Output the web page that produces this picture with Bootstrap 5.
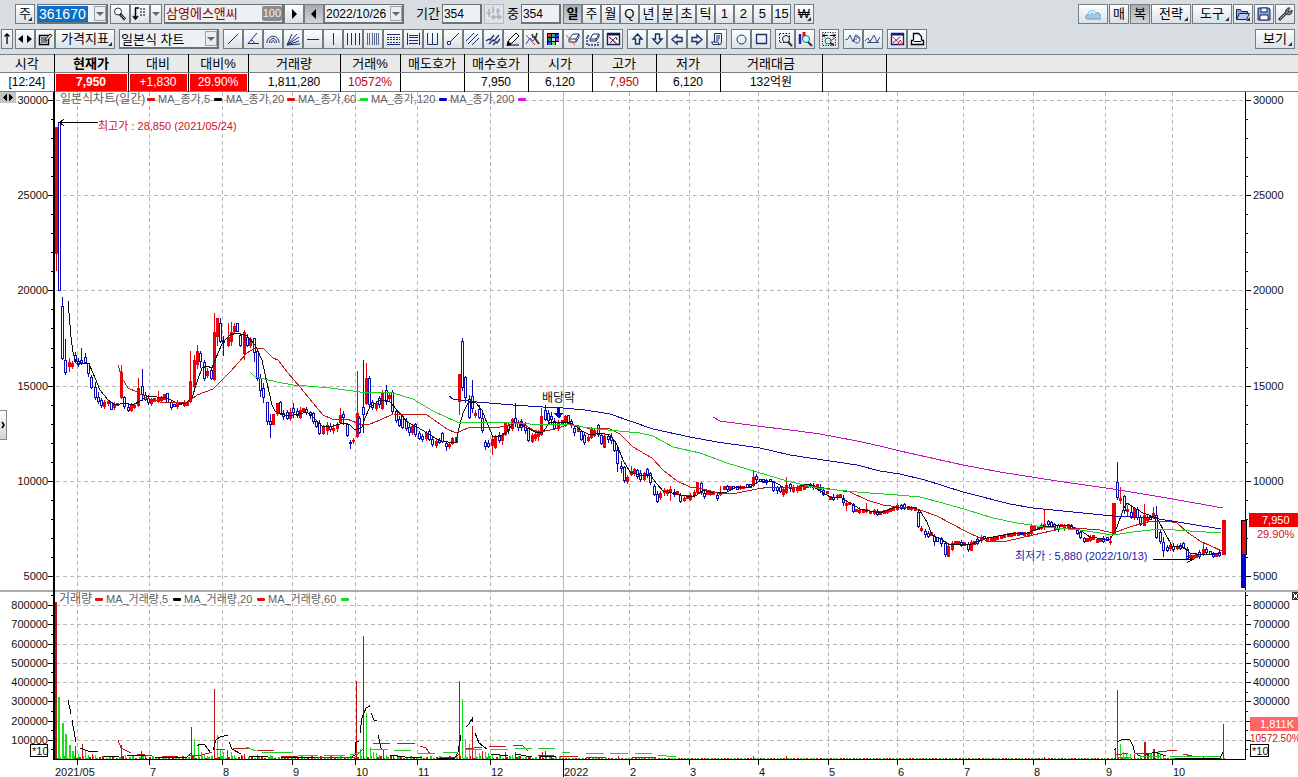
<!DOCTYPE html>
<html lang="ko">
<head>
<meta charset="utf-8">
<meta name="viewport" content="width=device-width, initial-scale=1">
<title>삼영에스앤씨 361670</title>
<link href="https://cdn.jsdelivr.net/npm/bootstrap@5.3.0/dist/css/bootstrap.min.css" rel="stylesheet">
<style>
body{font:13px/18px "Liberation Sans","Noto Sans CJK KR",sans-serif;color:#000;background:#fff}
.toolbars{background:#d8dde1;padding:4px 3px 5px 1px;gap:5px}
.g2{margin-left:2px}
.g3{margin-left:3px}
.g14{margin-left:14px}
.cluster{gap:1px}
.tb{height:20px;width:20px;padding:0;border:1px solid #747c80;border-radius:0;background:linear-gradient(#fdfefe,#d9e2e8);font:inherit;color:#000;flex:none;display:flex;align-items:center;justify-content:center;position:relative;white-space:nowrap}
.tb svg{display:block;flex:none}
.tb.unit{width:19px}
.tb.slim{width:12px}
.tb.mid{width:30px}
.tb.wide{width:40px}
.tb.wider{width:60px}
.tb.on{background:linear-gradient(#a9abad,#d2d4d6)}
.tb.off{border-color:#b4babd;background:#dfe3e6}
.tb.more::after{content:"";position:absolute;right:2px;bottom:2px;border:2px solid;border-color:transparent #333 #333 transparent}
.fieldbox{height:20px;border:1px solid #6b7377;border-right-width:2px;border-bottom-width:2px;background:#eef1f3;flex:none;display:flex;align-items:center;overflow:hidden}
.fieldbox input,.fieldbox select{border:0;outline:0;padding:0 1px;height:16px;background:transparent;font:inherit;font-size:12px;color:#000;appearance:none;border-radius:0;min-width:0;flex:1}
.fieldbox select{font-size:13px}
.fieldbox .picked{background:#0b6fca;color:#fff;font-size:14px;flex:none;width:50px}
.drop{width:12px;height:15px;padding:0;border:1px solid #9aa3a8;background:#e9edf0;flex:none;display:flex;align-items:center;justify-content:center;margin-left:auto}
.drop::after{content:"";border:4px solid transparent;border-top-color:#667;border-bottom:0}
.w-code{width:71px}.w-name{width:120px}.w-date{width:80px}.w-num{width:40px}.w-type{width:100px}
.fieldbox .stockname{color:#8b0000;font-size:13px}
.pct{background:#8c8c8c;color:#eee;font-size:11px;line-height:15px;border-radius:2px;padding:0 1px}
.quotes{table-layout:fixed;width:100%;border-collapse:collapse;border-top:1px solid #7b7f82;border-bottom:1px solid #7b7f82;font-size:12px}
.quotes th{font-weight:400;font-size:13px;height:18px;line-height:17px;background:#e9e9e9;border-bottom:1px solid #7b7f82}
.quotes th,.quotes td{text-align:center;padding:0;border-right:1px solid #000;white-space:nowrap;overflow:hidden}
.quotes td{height:19px;line-height:17px}
.quotes th:last-child,.quotes td:last-child{border-right:0}
.quotes .hot{background:#f00;color:#fff;margin:0 1px;line-height:17px}
.up{color:#c00010}
.c54{width:54px}.c74{width:74px}.c60{width:60px}.c92{width:92px}.c64{width:64px}.c102{width:102px}
.chart{display:block;width:100%;height:auto}
.chart text{font-family:"Liberation Sans","Noto Sans CJK KR",sans-serif;font-size:11px;fill:#111}
.chart .legend{fill:#606060}
.chart .title12{font-size:12px}
.chart .t-red{fill:#d0101c}
.chart .t-blue{fill:#2020b0}
.chart .t-white{fill:#fff}
.chart .t-small{font-size:10px}
.handle{position:absolute;left:0;top:46.4%;width:7px;height:30px;border:1px solid #7f888d;border-left:0;background:linear-gradient(#fff,#ced4d8);padding:0;display:flex;align-items:center}
</style>
</head>
<body>
<header class="toolbars d-flex flex-column">
  <div class="d-flex align-items-center" role="toolbar" aria-label="종목">
    <button class="tb more g14">주</button>
    <div class="fieldbox w-code g2"><input class="picked" aria-label="종목코드" value="361670"><button class="drop" aria-label="목록"></button></div>
    <button class="tb g2" data-i="search" aria-label="찾기"></button>
    <button class="tb" data-i="sort" aria-label="정렬"></button>
    <button class="tb slim" data-i="caret" aria-label="정렬 목록"></button>
    <div class="fieldbox w-name g2"><input class="stockname" aria-label="종목명" value="삼영에스앤씨"><span class="pct">100</span></div>
    <button class="tb" data-i="play" aria-label="다음"></button>
    <button class="tb on" data-i="back" aria-label="이전"></button>
    <div class="fieldbox w-date"><input aria-label="날짜" value="2022/10/26"><button class="drop" aria-label="달력"></button></div>
    <label class="ps-2 ms-1" for="span">기간</label>
    <div class="fieldbox w-num g2"><input id="span" value="354"></div>
    <button class="tb off g2" data-i="fit" aria-label="맞춤"></button>
    <label class="g3" for="mid">중</label>
    <div class="fieldbox w-num g2"><input id="mid" value="354"></div>
    <div class="d-flex g2">
      <button class="tb unit on fw-bold">일</button><button class="tb unit">주</button><button class="tb unit">월</button><button class="tb unit">Q</button><button class="tb unit">년</button><button class="tb unit">분</button><button class="tb unit">초</button><button class="tb unit">틱</button><button class="tb unit">1</button><button class="tb unit">2</button><button class="tb unit">5</button><button class="tb unit">15</button>
    </div>
    <button class="tb more g3">₩</button>
    <div class="d-flex ms-auto cluster">
      <button class="tb mid" data-i="cloud" aria-label="클라우드"></button><button class="tb">매</button><button class="tb on">복</button><button class="tb wide more">전략</button><button class="tb wide more">도구</button><button class="tb more" data-i="folder" aria-label="열기"></button><button class="tb" data-i="save" aria-label="저장"></button><button class="tb" data-i="wrench" aria-label="설정"></button>
    </div>
  </div>
  <div class="d-flex align-items-center" role="toolbar" aria-label="도구">
    <button class="tb slim" data-i="thinup" aria-label="위로"></button>
    <div class="d-flex me-1 g2"><button class="tb" data-i="lr" aria-label="좌우"></button><button class="tb" data-i="note" aria-label="편집"></button><button class="tb wider more">가격지표</button></div>
    <div class="fieldbox w-type me-1"><select aria-label="차트 종류"><option>일본식 차트</option></select><span class="drop"></span></div>
    <div class="d-flex gap-1" id="drawtools"></div>
    <button class="tb wide more ms-auto">보기</button>
  </div>
</header>
<table class="quotes">
  <colgroup><col class="c54"><col class="c74"><col class="c60"><col class="c60"><col class="c92"><col class="c60"><col class="c64"><col class="c64"><col class="c64"><col class="c64"><col class="c64"><col class="c102"><col class="c64"><col></colgroup>
  <thead><tr><th>시각</th><th class="fw-bold">현재가</th><th>대비</th><th>대비%</th><th>거래량</th><th>거래%</th><th>매도호가</th><th>매수호가</th><th>시가</th><th>고가</th><th>저가</th><th>거래대금</th><th></th><th></th></tr></thead>
  <tbody><tr><td>[12:24]</td><td><div class="hot fw-bold">7,950</div></td><td><div class="hot">+1,830</div></td><td><div class="hot">29.90%</div></td><td>1,811,280</td><td class="up">10572%</td><td></td><td>7,950</td><td>6,120</td><td class="up">7,950</td><td>6,120</td><td>132억원</td><td></td><td></td></tr></tbody>
</table>
<main class="position-relative">
  <svg class="chart" id="chart" viewBox="0 92 1298 685" role="img" aria-label="일본식차트(일간)"></svg>
  <button class="handle" aria-label="펼치기"><svg width="6" height="8" viewBox="0 0 6 8"><path d="M2 1l2 3-2 3" fill="none" stroke="#000" stroke-width="1.6"/></svg></button>
</main>
<script src="https://cdn.jsdelivr.net/npm/bootstrap@5.3.0/dist/js/bootstrap.bundle.min.js"></script>
<script>
// Toolbar icons on a 16 x 16 grid. "n" is the navy line style shared by the drawing tools.
const n='fill="none" stroke="#1b2f6b"', k='fill="none" stroke="#000"';
const icons={
search:`<circle cx="6" cy="5.500" r="3.500" fill="#fff" stroke="#333"/><path d="M8 8l5 5.500" stroke="#222" stroke-width="3"/><path d="M9 9l4 4" stroke="#aaa"/>`,
sort:`<path d="M3.500 2v11M1 10l2.500 3L6 10M3 2h4" ${k} stroke-width="1.500"/><path d="M8 3h6M8 6h6M8 9h5" ${k} stroke-dasharray="2 1"/>`,
caret:`<path d="M4 6h8l-4 4z" fill="#667"/>`,
play:`<path d="M6 3v10l5-5z"/>`,back:`<path d="M10 3v10L5 8z"/>`,
fit:`<path d="M3 3v8M1 7h4M7 1v6M12 2v7M10 5h4M6 11h9M8 9l-2 2 2 2M12 9l3 2-3 2" fill="none" stroke="#aab0b4" stroke-width="1.500"/>`,
cloud:`<path d="M2 13c-3-1-2-4 1-4 0-5 6-6 8-2 3-1 4 1 4 2 3 1 2 4 0 4z" fill="#9cc9e8" stroke="#6d9abb"/><path d="M4 8c1-3 4-3 6-1" stroke="#e3f3fd" stroke-width="2" fill="none"/>`,
folder:`<path d="M1.500 13.500v-10h4l1 2h6v3" fill="#8ea2d4" stroke="#152453"/><path d="M1.500 13.500l3-6h10l-3 6z" fill="#b8c8ee" stroke="#152453"/>`,
save:`<path d="M2 2h11l1 1v11H2z" fill="#8da0d8" stroke="#1b2659"/><path d="M5 2h6v4H5zM4 9h8v5H4z" fill="#fff" stroke="#1b2659"/><path d="M9 3v2M6 11h4"/>`,
wrench:`<path d="M2 14l7-7" stroke="#333" stroke-width="3"/><path d="M3 13l6-6" stroke="#bbb"/><path d="M9 8c-2-4 2-7 4-6l-2 3 1 1 3-2c1 4-3 6-6 4" fill="#777" stroke="#333"/>`,
thinup:`<path d="M8 13V3M5.500 5.500L8 3l2.500 2.500" ${k} stroke-width="1.300"/>`,
lr:`<path d="M6 4v8L1 8zM10 4v8l5-4z"/><path d="M4 8h2M10 8h2" stroke="#000" stroke-width="2"/>`,
note:`<path d="M2.500 4.500h9v9h-9z" fill="#fff" stroke="#000" stroke-width="1.500"/><path d="M4 7h5M4 9h4M4 11h6" ${k}/><path d="M8 9l5-6 2 1.500-5 5z" fill="#fff" stroke="#000"/>`,
line:`<path d="M3 13L13 3" ${n}/>`,angle:`<path d="M12 2L3 12.500h11M6 9c2 0 3 2 3 4" ${n}/>`,
arcs:`<path d="M2 12c0-9 12-9 12 0M4.500 12c0-6 7-6 7 0M6.500 12c0-3 3-3 3 0" ${n}/>`,
fan:`<path d="M2 14L14 10M2 14L14 6M2 14L12 3M2 14L7 3M2 14L15 13" ${n}/>`,
hl:`<path d="M2 8.500h12" ${n}/>`,vl:`<path d="M8.500 2v12" ${n}/>`,
vls:`<path d="M2.500 2v12M6.500 2v12M10.500 2v12M14.500 2v12" ${n}/>`,
vld:`<path d="M2.500 2v12M4.500 2v12M7.500 2v12M9.500 2v12M11.500 2v12M13.500 2v12" fill="none" stroke="#56648f"/>`,
dots:`<path d="M2 3.500h13M2 13.500h13" ${n}/><path d="M2 6.500h13M2 8.500h13M2 11.500h13" ${n} stroke-dasharray="2 1"/>`,
rows:`<path d="M2.500 2v12M14.500 2v12M4 4.500h9M4 6.500h9M4 9.500h9M4 12.500h9" ${n}/>`,
uu:`<path d="M2.500 2v11.500h5V2M7.500 13.500h5V2" ${n}/>`,
seg:`<path d="M5 11L14 2" ${n}/><path d="M2.500 10.500h3v3h-3z" fill="#fff" stroke="#1b2f6b"/>`,
par:`<path d="M1 10l8-8M3 13L13 3M7 14l7-7" ${n}/>`,
par2:`<path d="M1 10l3-2 1 1 4-5M4 13l4-4 1 1 5-6M8 14l3-3 1 1 3-4" ${n} stroke-width="1.300"/>`,
pencil:`<path d="M3 13l1-4 7-7 3 3-7 7z" fill="#fff" stroke="#000"/><path d="M2 14.500l1-4 3 3zM2 14h12" fill="#000" stroke="#000"/>`,
cut:`<path d="M1 4l9 10" stroke="#d22"/><path d="M1 13l4-6 3 3 3-4" fill="none" stroke="#3344bb"/><path d="M9 6l5 7" stroke="#333" stroke-width="2"/><path d="M7 3l1 3 3 0 1-4" fill="none" stroke="#333" stroke-width="1.600"/>`,
pal:`<path d="M2 2h12v12H2z"/><path d="M3 3h3v3H3z" fill="#d33"/><path d="M7 3h3v3H7z" fill="#3a9"/><path d="M11 3h3v3h-3z" fill="#14c"/><path d="M3 7h3v3H3z" fill="#186"/><path d="M7 7h3v3H7z" fill="#aef"/><path d="M11 7h3v3h-3z" fill="#84d"/><path d="M3 11h3v3H3z" fill="#35f"/><path d="M7 11h3v3H7z" fill="#7d4"/><path d="M11 11h3v3h-3z" fill="#fff"/>`,
era:`<path d="M4 8l4-5h6l-3 5zM4 8v3h7V8M11 11l3-5V3" fill="#fff" stroke="#1b2f6b"/><path d="M1 4l9 10" stroke="#e44"/>`,
era2:`<path d="M5 8l3-5h6l-3 5zM5 8v2h6V8M11 10l3-4V3" fill="#fff" stroke="#1b2f6b"/><path d="M2 6v8h11v-3M2 5h3" ${n} stroke-dasharray="2 1" stroke-width="1.400"/>`,
xw:`<path d="M2.500 2.500h12v11h-12z" fill="#fff" stroke="#151b52" stroke-width="1.400"/><path d="M2 3.500h13" stroke="#151b52" stroke-width="2"/><path d="M4 6l8 7" stroke="#d22" stroke-width="1.300"/><path d="M5 12l6-6 1 3" ${n}/>`,
up:`<path d="M8.500 3l4.500 5h-2.500v5h-4V8H4z" ${n} stroke-width="1.400"/>`,
down:`<path d="M8.500 13L13 8h-2.500V3h-4v5H4z" ${n} stroke-width="1.400"/>`,
left:`<path d="M3 8.500L8 4v2.500h5v4H8V13z" ${n} stroke-width="1.400"/>`,
right:`<path d="M13 8.500L8 4v2.500H3v4h5V13z" ${n} stroke-width="1.400"/>`,
scroll:`<path d="M5.500 11V2.500h7V11l-1 2.500H4L2.500 11H9l1 2.500M7 5h4M7 7h4M7 9h3" fill="none" stroke="#1b2f6b"/>`,
circ:`<circle cx="8.500" cy="8.500" r="4.500" ${n}/>`,sq:`<path d="M3.500 3.500h10v9h-10z" ${n} stroke-width="1.300"/>`,
zoomr:`<path d="M2.500 2.500h10v9h-10z" ${k} stroke-dasharray="1.500 1.500"/><circle cx="9" cy="8" r="3.500" fill="#eef" stroke="#222"/><path d="M11 11l4 4" stroke="#333" stroke-width="2"/>`,
zoomc:`<path d="M3 3v10" stroke="#22a" stroke-width="2.500"/><path d="M7 1v8" stroke="#d11" stroke-width="3"/><circle cx="9" cy="8" r="3.500" fill="#bff" stroke="#367"/><path d="M11 11l4 4" stroke="#333" stroke-width="2"/>`,
zooma:`<path d="M1.500 1.500h13v13h-13z" ${k} stroke-dasharray="1 1.500"/><path d="M2 4.500h5M4 2.500l-2 2 2 2M9 4.500h5M12 2.500l2 2-2 2" ${k}/><circle cx="7" cy="10" r="3" fill="#bff" stroke="#367"/><path d="M9 12l4 2" stroke="#333" stroke-width="2"/><path d="M9 10l5-3" stroke="#d22"/>`,
wave:`<path d="M0 9l3-1 2-4 3 7 2-6 4 2M10 4c6 0 6 8 2 8s-4-5 0-4" fill="none" stroke="#3c4a86"/>`,
wave2:`<path d="M0 10l3-3 2 4 4-7 3 7 3-5M2 11.500h12" fill="none" stroke="#3c4a86"/>`,
xw2:`<path d="M2.500 2.500h12v11h-12z" fill="#fff" stroke="#151b8a" stroke-width="1.400"/><path d="M2 3.500h13" stroke="#151b8a" stroke-width="2"/><path d="M4 6l7 7" stroke="#d22"/><path d="M9 13l2-4 3 4z" fill="#fff" stroke="#d22"/><path d="M4 12l7-6" ${n}/>`,
print:`<path d="M4.500 9.500v-7h5l3 3v4" fill="#fff" stroke="#000" stroke-width="1.300"/><path d="M4.500 9.500h-2v4h12v-4h-2" fill="#fff" stroke="#000" stroke-width="1.300"/><path d="M5 10.500h7" stroke="#000"/>`
};
const draw=i=>`<svg width="16" height="16" viewBox="0 0 16 16" aria-hidden="true">${icons[i]}</svg>`;
document.querySelectorAll('[data-i]').forEach(b=>b.innerHTML=draw(b.dataset.i));
document.getElementById('drawtools').innerHTML=['line angle arcs fan hl vl vls vld dots rows uu seg par par2 pencil cut pal era era2 xw','up down left right scroll','circ sq','zoomr zoomc','zooma','wave wave2','xw2 print']
 .map(g=>'<div class="d-flex">'+g.split(' ').map(i=>`<button class="tb" aria-label="${i}">${draw(i)}</button>`).join('')+'</div>').join('');

// Candles: colour, x, then body top/bottom, or high/top/bottom/low.
const candles=`R56 127 127 253 270;B59 122 290;B62 297 306 358 359;B65 339 360 372 374;R69 358 362 366 371;R72 361 363 366 368;B75 352 355 361 362;B78 358 361 364 366;B81 348 360 362 364;B85 353 357 362 363;B88 363 363 373 376;B91 375 377 387 388;B95 382 387 397 399;B98 392 397 401 403;B101 398 400 405 407;R104 400 402 406 408;R108 400 401 403 405;B111 402 409;R114 402 405 407 409;R117 403 405;R121 365 372 397 398;B124 396 397 406 408;B128 404 407 410 411;R131 403 405 410 411;R134 403 405 407 408;R138 378 388 405 406;B142 369 386 394 400;B145 392 395 399 400;B148 395 398 402 404;R151 398 400 403 405;R154 398 401;R158 391 397 401 402;R161 396 398 400 402;R164 394 399;B167 393 402;B171 400 402 407 409;B174 404 406;R177 400 403 406 408;B180 402 404;R184 400 403 405 406;R187 402 405;R190 351 381 401 402;R194 355 360 386 387;R197 345 351 364 368;B200 351 353 361 367;B204 360 362 378 380;R207 368 371 375 377;B211 367 370 378 379;R214 313 332 379 380;R217 318 318 336 345;B220 318 323 341 342;B223 336 340 342 355;R228 323 337 345 346;R231 322 332 341 345;R234 323 326 331 333;B237 323 331;B240 333 335 345 346;R244 330 332 353 359;B247 334 337 345 346;R250 337 339 345 347;B254 338 338 352 361;B257 351 351 378 380;B260 374 378 390 396;B263 383 388 397 402;B267 402 402 421 424;B270 414 421 424 437;R273 414 414 424 424;R277 403 403 413 415;B280 401 402 413 414;B283 410 413 416 419;B287 410 412 418 419;R290 408 412 418 420;B293 403 408 412 417;B297 408 411 415 417;R300 407 410 417 418;R303 408 411;B306 407 409 412 414;B310 411 412 415 418;B313 412 413 421 423;B316 420 421 426 427;B319 420 423 433 434;R323 425 427 433 434;R327 422 425 430 434;B330 423 426 429 431;R333 424 428 430 433;R337 422 424 428 431;R340 408 415 422 423;B343 411 414 417 424;B347 423 424 435 436;B350 440 442 443 448;R353 438 440 441 443;R357 371 413 436 437;B359 416 418 432 433;B363 360 407 414 432;R366 363 378 403 404;B369 376 378 404 406;B372 400 402 407 409;R376 401 403 408 410;B379 396 398 404 407;R382 390 392 408 409;B386 385 390 400 404;R389 392 395 398 401;B392 390 392 411 413;B396 409 411 420 422;B399 416 419 425 426;B402 414 416 427 428;B406 418 421 428 430;B409 424 427 432 435;R412 425 426 432 434;B415 423 424 434 436;B419 431 433 438 439;B422 434 436 439 441;R426 431 433 438 440;B429 429 431 439 440;B432 437 439 444 446;R436 439 441 445 447;B439 438 440 442 443;B442 432 433 441 442;B446 441 443 446 450;R449 442 444 446 448;R452 437 438 443 444;R456 437 442;R459 374 374 401 414;B462 338 341 387 390;B465 376 377 397 402;B469 395 399 417 418;B472 380 396 408 412;R475 410 413 415 417;B479 405 409 417 418;B482 412 418 430 432;B485 440 442 446 449;B488 440 443 446 447;R492 437 439 445 454;R495 435 437 447 448;B499 432 435 440 442;R502 433 435 440 444;R505 422 423 434 435;B508 422 425 430 433;R512 418 419 428 430;B515 403 418 422 426;B518 420 423 427 430;B521 419 421 427 430;B525 422 425 430 433;B528 427 428 440 441;R532 433 435 441 442;R535 431 434 438 440;R538 430 432 436 440;R541 408 416 434 435;B545 405 410 419 420;B548 410 413 420 422;B551 412 416 419 424;B554 418 421 428 429;R558 420 422 428 430;R562 420 424;R565 415 416 422 426;B568 415 423;B571 419 421 425 427;B574 426 428 432 435;R578 427 431;B581 430 431 439 440;B584 433 435 442 444;R588 435 437 440 441;R591 427 428 437 438;R594 428 430 435 436;B598 424 425 434 436;B601 434 435 443 444;R604 434 436 447 447;B608 435 436 439 442;B611 433 437 440 443;B614 440 441 450 451;B617 448 450 463 471;B621 461 466 468 472;B624 466 467 480 482;R627 475 477 481 483;R631 466 471 474 475;R634 468 469 472 475;B637 469 470 476 478;B640 470 473 479 481;R644 472 473 479 480;B647 468 469 474 477;B650 472 473 482 484;B654 484 486 494 495;B657 491 494 501 502;R660 491 493 497 499;R664 488 490 492 495;R667 489 490 493 495;R670 486 489 491 500;B674 489 492 494 496;R677 491 494;B680 493 495 501 502;R684 495 498 500 501;R687 495 498;R690 493 495 499 500;R694 490 492 495 497;R697 482 482 492 493;B701 482 483 492 494;B704 491 493 496 498;R707 492 494;R710 490 492 494 495;R713 491 494;B717 492 495 498 500;R720 486 493 494 495;R724 486 489;B727 485 486 489 490;R730 486 489;B733 486 488;B737 486 489;R740 485 486 488 489;R743 486 488;B747 484 487;B750 484 487;R753 471 477 485 486;B756 474 476 479 483;B760 479 481;B763 479 482;B766 479 480 482 484;B770 479 481;B773 481 482 490 491;B777 486 487 490 493;B780 485 487 491 492;R783 487 489 494 496;R786 477 485 492 493;B790 483 484 488 491;R793 485 488 491 492;R797 485 487 490 492;R800 485 490;R804 486 489;R807 484 487;B810 483 484 486 487;B813 483 485 487 489;R817 484 487;B820 484 487 489 492;B823 488 490 494 495;R827 491 493;R830 496 499;B833 494 497 499 500;R837 494 495 497 499;R840 494 497;B843 495 498 502 505;R846 501 503 505 510;R849 502 504;B853 503 504 511 512;R856 509 511;R859 507 510 512 513;R863 509 512;R866 503 509 511 512;R870 511 513;R874 509 510 513 514;B877 509 511 514 515;R880 511 514;R884 510 513;R887 509 510 512 513;R890 508 511;R893 507 510;R897 503 505 509 510;B901 504 505 508 509;B904 503 504 508 509;R908 506 509;R911 506 507 509 510;R915 507 510;B918 511 512 526 527;R921 526 528 530 531;B925 529 531 534 537;B928 531 533 536 537;R931 532 535;B934 534 536 541 545;B937 537 541;B941 537 538 543 546;B945 541 543 554 556;R948 544 546 556 556;R952 541 543 549 550;R955 541 544;R958 541 543;B961 540 542 545 546;R964 542 545;B968 542 544 549 551;R971 540 542 550 550;R974 541 544;B977 537 539 543 544;R981 535 537 540 542;B984 536 538;R987 538 541;R991 538 540;R994 537 540;R997 536 539;R1001 535 538;R1004 534 537;R1008 533 536;R1011 533 536;R1014 532 535;R1018 532 535;B1021 532 534;R1024 532 535;R1028 532 536;R1031 524 526 533 534;R1034 526 530;R1038 526 529;R1041 523 525 528 529;R1044 510 524 526 529;B1048 520 521 524 527;B1051 521 522 526 527;B1054 523 524 527 530;B1058 524 525 529 531;R1061 524 526;R1064 524 525 528 530;R1068 524 527;B1071 524 525 528 529;R1074 527 529;B1077 528 530 533 534;B1080 530 532 537 538;B1084 537 538 541 542;R1087 538 541;R1090 535 537 540 541;R1093 535 539;R1097 539 542;R1100 539 541;B1103 536 538 541 542;B1107 537 540;R1110 536 541 542 544;R1113 503 503 533 533;B1117 462 482 497 499;R1120 487 498 500 503;B1124 495 496 510 513;R1127 505 509 511 516;B1131 507 512 517 518;R1134 507 508 517 519;B1137 507 509 517 519;B1140 515 517 524 525;R1144 504 515 525 525;R1147 514 517 520 522;B1150 516 519;R1153 507 513 516 518;B1156 506 515 537 538;B1160 530 532 541 543;B1163 537 542 550 556;B1167 545 547 550 551;R1170 543 545 548 550;B1173 543 546 549 551;R1177 544 546 548 549;B1180 543 545 548 549;B1183 542 543 547 548;B1187 547 549 558 559;R1190 553 555 557 558;R1193 555 558;R1196 554 557;B1199 550 552 556 558;R1203 542 549 554 555;B1206 547 549 552 553;B1210 551 554;B1213 552 554 556 557;R1216 553 556;B1219 550 552 555 556;R1223 520 520 554 554`;
const priceLines={
'#111':'68,301 71,337 73,352 76,363 89,364 93,373 100,390 108,400 115,405 125,403 133,405 142,400 147,396 167,398 175,402 185,404 192,398 197,382 202,368 207,366 212,368 218,353 223,342 230,335 237,333 247,336 255,345 262,360 267,383 272,405 275,411 280,414 290,416 307,412 313,417 323,427 333,426 343,423 350,425 355,430 362,427 365,418 370,407 380,400 390,402 397,410 407,422 417,427 427,433 440,441 456,443 459,428 463,413 468,403 475,402 482,410 487,423 493,437 500,436 507,432 513,423 518,423 527,428 537,433 543,432 550,422 555,423 567,422 573,424 582,431 590,435 600,433 610,435 617,445 623,460 630,472 640,475 650,475 657,484 663,491 677,494 690,497 697,495 703,490 713,493 727,492 737,487 750,487 760,481 773,481 783,487 797,487 807,484 817,489 830,497 840,497 850,503 860,509 880,513 893,508 913,507 920,511 927,522 932,535 942,540 950,545 972,544 987,538 1010,534 1027,533 1043,527 1067,525 1080,530 1090,537 1110,540 1117,527 1123,510 1127,503 1133,507 1143,513 1157,518 1165,533 1172,546 1182,546 1190,553 1203,555 1220,553',
'#c01818':'118,365 122,378 128,388 137,392 147,398 160,402 188,402 197,395 213,389 230,372 247,353 255,348 263,348 273,358 278,360 288,373 300,387 313,403 323,415 332,419 347,419 362,425 370,424 380,420 393,414 427,415 437,422 447,429 456,433 468,428 500,427 520,422 533,430 540,432 555,429 570,424 587,428 608,428 620,434 633,447 652,458 663,470 677,481 690,487 703,489 717,493 737,493 757,489 770,487 797,487 813,486 830,489 850,492 867,500 883,505 907,508 920,510 937,516 950,523 967,532 980,538 990,542 1007,541 1033,535 1060,529 1073,528 1100,530 1113,533 1133,526 1147,522 1167,521 1177,523 1187,532 1200,541 1222,551',
'#1fd01f':'250,372 255,377 277,382 293,385 307,386 330,388 360,392 393,393 413,399 433,411 457,422 493,422 530,424 563,424 597,429 640,433 653,436 673,447 700,453 727,463 757,472 787,481 817,488 857,492 897,495 920,497 943,503 967,510 993,518 1017,523 1043,527 1080,530 1113,535 1133,532 1160,529 1190,531 1221,533',
'#1010a8':'449,396 453,399 477,402 513,405 543,407 563,408 585,410 610,414 630,421 653,429 690,437 717,442 760,448 790,455 830,461 857,465 880,471 900,474 925,480 963,492 1010,504 1033,508 1073,512 1113,516 1153,518 1190,524 1221,529',
'#c010c0':'713,417 720,421 757,426 790,430 820,434 857,441 880,446 900,451 963,465 1000,472 1057,481 1113,489 1167,498 1223,508'};
const volumes='R55 602;G58 697;G62 723;G65 734;G69 745;G72 751;R75 746;G78 754;R82 744;G85 750;G88 755;R92 754;G95 755;R121 745;G125 755;R141 751;R145 755;R191 727;G194 739;G198 745;G201 752;G204 755;G207 756;R214 689;G217 735;G220 750;G223 752;R227 750;G231 752;G234 755;R241 755;R244 754;R257 755;G270 755;R356 681;G360 749;R363 636;G366 713;G370 747;G373 752;G376 753;G379 755;R383 750;G386 755;R393 755;G399 756;R459 681;G462 699;G465 739;G469 744;R472 726;G475 750;G479 753;R482 751;G485 752;G488 753;G492 755;G499 755;R505 752;G512 755;R515 752;G518 756;R528 756;R542 752;R545 751;R551 755;R618 756;R753 756;R786 756;R1044 757;R1115 748;R1117 690;G1120 744;G1123 752;G1126 754;G1130 754;R1134 754;G1140 755;R1144 742;R1147 755;G1150 754;R1153 749;G1157 752;G1160 754;G1163 756;R1203 756;R1223 724';
const volLines=[
['#000','68,700 71,714'],['#000','72,720 76,742'],['#000','80,748 88,751 98,752'],['#000','104,756 119,757'],['#000','127,755 147,756'],['#000','155,757 186,758 191,753'],['#000','197,746 200,744 205,745 211,753'],['#000','213,750 216,740 220,737 228,735'],['#000','229,742 232,749 241,754'],['#000','249,756 268,757'],['#000','280,757 350,758 355,755 356,742 359,741'],['#000','360,733 362,718 366,708 370,706 369,705'],['#000','371,713 374,720 377,720'],['#000','378,735 381,748 383,750'],['#000','390,755 405,757 422,757'],['#000','438,758 455,758 458,752 461,735'],['#000','466,727 469,724 472,719 472,722'],['#000','475,733 479,743 487,749'],['#000','491,754 508,756'],['#000','515,754 532,757'],['#000','540,756 556,756'],
['#c01818','118,740 121,748 131,753'],['#c01818','137,754 152,756'],['#c01818','162,756 178,757'],['#c01818','188,756 202,755 212,752'],['#c01818','216,750 225,749'],['#c01818','233,748 250,749'],['#c01818','257,750 274,751'],['#c01818','281,756 298,757'],['#c01818','315,757 355,757 363,749'],['#c01818','373,744 390,743'],['#c01818','397,743 415,743'],['#c01818','420,746 426,748 430,754'],['#c01818','440,757 456,757 460,753'],['#c01818','466,749 482,747'],['#c01818','489,746 506,746'],['#c01818','513,745 522,745 528,751'],['#c01818','538,755 554,755'],['#c01818','560,756 578,757'],['#c01818','586,757 606,757'],['#c01818','632,757 656,757'],
['#24c824','246,747 256,751'],['#24c824','262,752 292,753'],['#24c824','298,755 318,755'],['#24c824','324,755 345,755'],['#24c824','350,755 361,752'],['#24c824','371,750 388,749'],['#24c824','394,750 411,751'],['#24c824','418,753 435,753'],['#24c824','443,752 458,753'],['#24c824','465,749 482,749'],['#24c824','490,749 508,749'],['#24c824','515,748 532,748'],['#24c824','538,748 555,749'],['#24c824','562,752 570,753'],['#24c824','586,753 604,753'],['#24c824','610,753 628,753'],['#24c824','635,753 652,753'],['#24c824','658,755 676,757'],
['#000','1114,750 1116,748'],['#000','1117,742 1121,740 1125,739 1130,740 1133,746 1135,753 1140,756'],['#000','1146,755 1155,752 1160,754 1166,756'],['#000','1175,758 1220,758 1223,752'],
['#c01818','1116,755 1128,753'],['#c01818','1135,753 1152,753'],['#c01818','1158,752 1177,750'],['#c01818','1183,754 1192,756'],['#24c824','1117,757 1131,757'],['#24c824','1140,756 1160,756'],['#24c824','1170,756 1220,756']];
const months=[[77,''],[149,'7'],[222,'8'],[292,'9'],[355,'10'],[417,'11'],[490,'12'],[563,'2022'],[629,'2'],[689,'3'],[758,'4'],[828,'5'],[897,'6'],[963,'7'],[1033,'8'],[1105,'9'],[1172,'10']];
const L=(x1,y1,x2,y2,c,e='')=>`<path d="M${x1} ${y1}L${x2} ${y2}" stroke="${c}" ${e}/>`;
const R=(x,y,w,h,c,e='')=>`<rect x="${x}" y="${y}" width="${w}" height="${h}" fill="${c}" ${e}/>`;
const T=(x,y,s,c='',e='')=>`<text x="${x}" y="${y}" class="${c}" ${e}>${s}</text>`;
let g='<g shape-rendering="crispEdges" fill="none">';
const dash='stroke-dasharray="4 3"', grey='#b8b8b8';
months.forEach(([x])=>{g+=L(x+.5,92,x+.5,759,grey,x===563?'':dash)});
// price scale: 5,000 won is 95.2 units
const py=v=>Math.round(576-(v-5000)/5000*95.2)+.5;
for(let v=5000;v<=30000;v+=5000)g+=L(56,py(v),1245,py(v),grey,dash);
const vy=v=>Math.round(759-v*19.25)+.5;
for(let v=1;v<=8;v++)g+=L(56,vy(v),1245,vy(v),grey,dash);
// divider between the panes, then the axes
g+=R(0,590,1298,2,'#ababab');
g+=R(53,92,2,668,'#000')+R(1245,92,1,498,'#000')+R(1245,592,1,168,'#000')+R(53,759,1193,1,'#000');
for(let v=5000;v<=30000;v+=1000){const b=v%5000?2:5;g+=L(53-b,py(v),53,py(v),'#000')+L(1246,py(v),1246+b,py(v),'#000')}
for(let v=.5;v<=8.5;v+=.5){const b=v%1?2:5;g+=L(53-b,vy(v),53,vy(v),'#000')+L(1246,vy(v),1246+b,vy(v),'#000')}
months.forEach(([x])=>{g+=L(x+.5,760,x+.5,x===563?777:765,'#000')});
// volume floor: every session leaves at least a sliver
for(let i=0;i<354;i++){const x=Math.round(56+i*3.306),h=x<560?1+(i*7%3):1;g+=R(x,759-h,2,h,(i*5%7)<3?'#c01818':'#10d010')}
volumes.split(';').forEach(s=>{const [x,y]=s.slice(1).split(' ').map(Number);g+=R(x,y,x<75||x>1140&&x<1160?2:1,759-y,s[0]==='R'?'#c01010':'#18e018')});
volLines.forEach(([c,p])=>{g+=`<polyline points="${p}" stroke="${c}"/>`});
candles.split(';').forEach(s=>{
  const a=s.slice(1).split(' ').map(Number),x=a[0];
  const [hi,top,bot,lo]=a.length===3?[a[1],a[1],a[2],a[2]]:a.slice(1);
  const red=s[0]==='R',c=red?'#ee0008':'#0a0ab4';
  g+=L(x+.5,hi,x+.5,lo+1,c);
  g+=red?R(x-1,top,x>1111&&x<1115||x>1220||x===56?4:3,bot-top+1,c):`<rect x="${x-.5}" y="${top+.5}" width="2" height="${Math.max(1,bot-top)}" fill="${bot-top>1?'#fff':c}" stroke="${c}"/>`;
});
for(const c in priceLines)g+=`<polyline points="${priceLines[c]}" stroke="${c}"/>`;
// high, low and ex-dividend markers
g+=L(59,122.5,98,122.5,'#000')+'<path d="M64 119.500l-5 3 5 3" stroke="#000"/>'+L(1153,559.5,1193,559.5,'#000')+'<path d="M1187 556.500l6 3-6 3" stroke="#000"/>';
g+='<path d="M557 408h3v5h3l-4 6-5-6h3z" fill="#0000e0"/>';
g+=R(1241,520,5,34,'#d01818','stroke="#000"')+R(1241,554,5,34,'#0000d0');
g+=R(1249,513,49,14,'#f00000')+R(1250,717,48,14,'#ff6666');
g+=R(30.5,744.5,17,12,'#fff','stroke="#000"')+R(1250.5,744.5,18,12,'#fff','stroke="#000"');
g+=R(0,92,16,11,'#c4c4c4')+'<path d="M7 94v7l-4-3.500zM9 94v7l4-3.500z" fill="#000"/>';
g+=R(1292,592,6,8,'#333')+'<path d="M1293 593l5 6M1298 593l-5 6" stroke="#fff"/>';
g+='</g>';
for(let v=5000;v<=30000;v+=5000)g+=T(48,py(v)+3.5,v,'','text-anchor="end"')+T(1253,py(v)+3.5,v);
for(let v=1;v<=8;v++){g+=T(48,vy(v)+3.5,v+'00000','','text-anchor="end"');if(v>2)g+=T(1253,vy(v)+3.5,v+'00000')}
months.forEach(([x,t])=>{if(t)g+=T(x+1,776,t)});
g+=T(55,776,'2021/05');
const key=(x,y,c)=>`<rect x="${x}" y="${y}" width="8" height="3" rx="1" fill="${c}"/>`;
g+=T(60,103,'일본식차트(일간)','legend title12');
[[158,'5'],[226,'20'],[298,'60'],[371,'120'],[450,'200']].forEach(([x,t])=>{g+=T(x,103,'MA_종가,'+t,'legend')});
[[147,'#d11'],[214,'#000'],[287,'#d11'],[360,'#1d2'],[439,'#00c'],[518,'#d1d']].forEach(([x,c])=>{g+=key(x,98,c)});
g+=T(59,603,'거래량','legend title12');
[[106,'5'],[184,'20'],[268,'60']].forEach(([x,t])=>{g+=T(x,603,'MA_거래량,'+t,'legend')});
[[95,'#d11'],[173,'#000'],[257,'#d11'],[341,'#1d2']].forEach(([x,c])=>{g+=key(x,598,c)});
g+=T(98,130,'최고가 : 28,850 (2021/05/24)','t-red')+T(1015,560,'최저가 : 5,880 (2022/10/13)','t-blue')+T(542,402,'배당락','title12');
g+=T(1262,524,'7,950','t-white')+T(1257,538,'29.90%','t-red')+T(1260,728,'1,811K','t-white')+T(1250,742,'10572.50%','t-red t-small')+T(32,755,'*10')+T(1252,755,'*10');
document.getElementById('chart').innerHTML=g;
</script>
</body>
</html>
